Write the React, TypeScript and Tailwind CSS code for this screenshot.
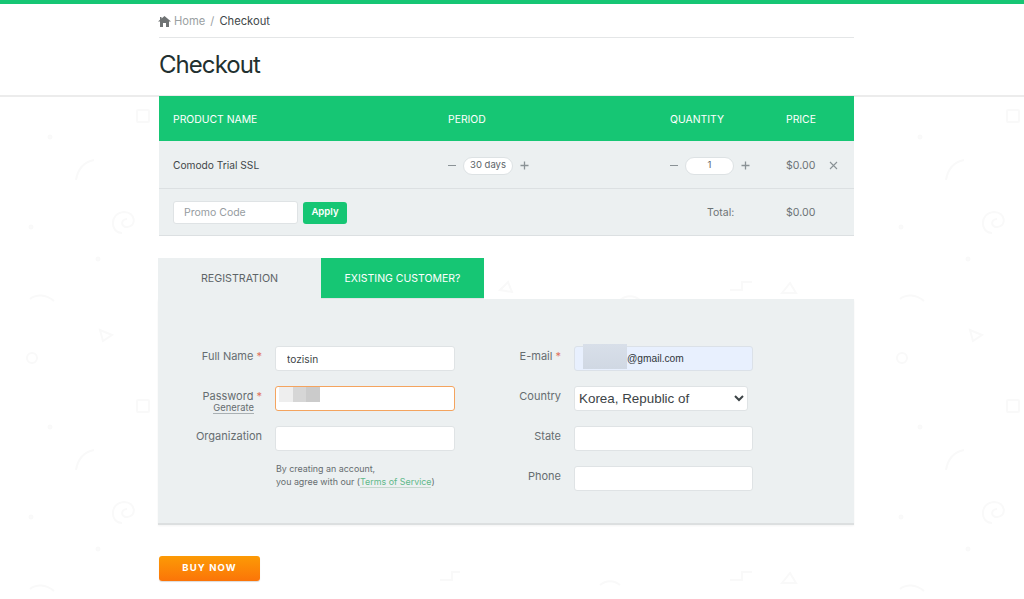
import React from 'react';

const font = "font-['Inter','Noto_Sans',sans-serif]";

const Stepper = ({ value, pill }: { value: string; pill: string }) => (
  <div className="flex items-center text-[#8a9296]">
    <span className="w-[8px] h-[1.5px] bg-[#8a9296]"></span>
    <span className={pill + ' mx-[7px] h-[18px] rounded-full bg-white border border-[#dde2e4] flex items-center justify-center text-[9.5px] text-[#5c6468]'}>{value}</span>
    <svg width="9" height="9" viewBox="0 0 9 9" className="stroke-[#8a9296]" strokeWidth="1.3">
      <path d="M4.5 0.5v8M0.5 4.5h8" />
    </svg>
  </div>
);

const Field = ({ label, required, sub, children }: { label: string; required?: boolean; sub?: boolean; children: React.ReactNode }) => (
  <div className="flex h-[25px] items-start">
    <div className="w-[104px] shrink-0 text-right text-[11px] leading-[14px] text-[#666d70] pt-[3px]">
      {label}
      {required && <span className="text-[#e0705c]"> *</span>}
      {sub && (
        <div className="text-[9.4px] leading-[10px] pr-[8px]">
          <span className="border-b border-[#a9b0b3]">Generate</span>
        </div>
      )}
    </div>
    <div className="ml-[13px] flex-1">{children}</div>
  </div>
);

const inputBase = 'block w-full h-[25px] rounded-[3px] border outline-none text-[#3c4346] px-[11px]';
const inputCls = inputBase + ' bg-white border-[#dfe3e5] text-[10.2px]';

const Pattern = () => (
  <svg className="absolute inset-0 w-full h-full" width="1024" height="599" fill="none" stroke="#f9f9f9" strokeWidth="2">
    <defs>
      <g id="decor">
        <path d="M122 233c-12 0-13-20 2-21 12 0 13 15 3 15-7 0-6-8 0-8" />
        <rect x="137" y="110" width="12" height="12" rx="1" />
        <path d="M76 180c2-12 8-18 18-20" />
        <path d="M30 299c6-5 16-5 24 2" />
        <path d="M100 330l12 5-9 6z" />
        <circle cx="32" cy="358" r="5" />
        <circle cx="50" cy="137" r="1.5" />
        <circle cx="31" cy="227" r="1.5" />
        <circle cx="98" cy="259" r="1.5" />
      </g>
    </defs>
    <use href="#decor" />
    <use href="#decor" y="290" />
    <use href="#decor" x="870" />
    <use href="#decor" x="870" y="290" />
    <path d="M730 290h12v-8h10M782 293l8-10 6 10zM440 580h12v-8h8M500 290l8-8 4 10zM620 300c6-5 14-5 20 0" />
    <path d="M730 580h12v-8h10M782 583l8-10 6 10zM600 585c6-5 14-5 20 0" />
  </svg>
);

export default function App() {
  return (
    <div className={font + ' relative w-full h-[599px] overflow-hidden bg-white'}>
      <Pattern />
      <div className="relative">
        <div className="h-[4px] bg-[#16c674]"></div>
        <header className="h-[93px] bg-white border-b-2 border-[#ececec]">
          <div className="w-[695px] ml-[159px]">
            <div className="h-[34px] pt-[1px] border-b border-[#e4e6e7] flex items-center text-[11.2px] text-[#9aa0a2]">
              <svg width="13" height="11" viewBox="0 0 13 11" className="fill-[#6f7374] -ml-[1px] mr-[3px]">
                <path d="M6.5 0L13 5.5H11V11H8V7H5V11H2V5.5H0L2 3.8V1H3.5V2.5z" />
              </svg>
              <span>Home</span>
              <span className="mx-[5px]">/</span>
              <span className="text-[#41474a]">Checkout</span>
            </div>
            <h1 className="mt-[12px] text-[24px] leading-[30px] font-normal text-[#22302f] tracking-[-0.95px]">Checkout</h1>
          </div>
        </header>

        <main className="w-[695px] ml-[159px]">
          <div className="-mt-[1px] h-[45px] pt-[2px] bg-[#16c674] text-white text-[10.4px] grid grid-cols-[275px_222px_116px_1fr] items-center pl-[14px]">
            <div>PRODUCT NAME</div>
            <div>PERIOD</div>
            <div>QUANTITY</div>
            <div>PRICE</div>
          </div>

          <div className="h-[48px] pt-[2px] bg-[#ecf0f1] border-b border-[#dce0e2] grid grid-cols-[275px_222px_116px_1fr] items-center pl-[14px] text-[10.2px]">
            <div className="text-[#3f4649]">Comodo Trial SSL</div>
            <Stepper value="30 days" pill="w-[50px]" />
            <Stepper value="1" pill="w-[49px]" />
            <div className="flex items-center text-[#6c7376]">
              <span className="text-[10.6px]">$0.00</span>
              <svg width="9" height="9" viewBox="0 0 9 9" className="ml-[14px] stroke-[#8a9296]" strokeWidth="1.1">
                <path d="M1 1l7 7M8 1l-7 7" />
              </svg>
            </div>
          </div>

          <div className="h-[47px] pt-[1px] bg-[#ecf0f1] border-b border-[#dce0e2] grid grid-cols-[275px_222px_116px_1fr] items-center pl-[14px] text-[10.5px]">
            <div className="col-span-2 flex items-center">
              <input readOnly placeholder="Promo Code" className="w-[125px] h-[23px] rounded-[3px] bg-white border border-[#dfe3e5] px-[10px] text-[10.5px] placeholder:text-[#969c9f] outline-none" />
              <button className="ml-[5px] w-[44px] h-[22px] rounded-[3px] bg-[#16c674] text-white font-semibold text-[9.6px]">Apply</button>
            </div>
            <div className="pl-[37px] text-[#6c7376]">Total:</div>
            <div className="text-[#6c7376] text-[10.6px]">$0.00</div>
          </div>

          <div className="mt-[22px] flex h-[41px] w-[326px]">
            <div className="w-[163px] -ml-[1px] pt-[2px] bg-[#ecf0f1] flex items-center justify-center text-[#5d6467] text-[10.7px]">REGISTRATION</div>
            <div className="w-[163px] pt-[2px] bg-[#16c674] border-b border-[#dfe3e5] flex items-center justify-center text-white text-[10.5px]">EXISTING CUSTOMER?</div>
          </div>

          <section className="-ml-[1px] w-[696px] h-[226px] bg-[#ecf0f1] border-b-2 border-[#dcdfe0] shadow-[0_1px_2px_rgba(0,0,0,0.05)] grid grid-cols-[297px_1fr] pt-[47px]">
            <div className="flex flex-col gap-[15px]">
              <Field label="Full Name" required>
                <input readOnly value="tozisin" className={inputCls} />
              </Field>
              <Field label="Password" required sub>
                <div className="relative">
                  <input readOnly className={inputBase + ' bg-white border-[#f4a45f]'} />
                  <div className="absolute left-[4px] top-[1px] flex h-[15px]">
                    <span className="w-[14px] bg-[#eeeeee]"></span>
                    <span className="w-[13px] bg-[#d6d6d6]"></span>
                    <span className="w-[14px] bg-[#cbcbcb]"></span>
                  </div>
                </div>
              </Field>
              <Field label="Organization">
                <input readOnly className={inputCls} />
              </Field>
              <p className="ml-[118px] -mt-[4px] text-[8.9px] leading-[13px] text-[#666d70]">
                By creating an account,
                <br />
                you agree with our (<span className="text-[#5fb98a] border-b border-[#c4d8cd]">Terms of Service</span>)
              </p>
            </div>

            <div className="flex flex-col gap-[15px] w-[296px] ml-[2px]">
              <Field label="E-mail" required>
                <div className="relative">
                  <input readOnly value="@gmail.com" className={inputBase + " bg-[#e8f0fe] border-[#dbe1e8] pl-[52px] font-['Liberation_Sans',sans-serif] text-[10.2px] text-[#30363a]"} />
                  <div className="absolute left-[9px] -top-[2px] w-[44px] h-[25px] bg-gradient-to-b from-[#d8dfe9] to-[#d0d8e3]"></div>
                </div>
              </Field>
              <Field label="Country">
                <select className="block w-[174px] h-[25px] rounded-[3px] bg-white border border-[#dfe3e5] text-[13.4px] text-[#3c4346] font-['Liberation_Sans',sans-serif] outline-none">
                  <option>Korea, Republic of</option>
                </select>
              </Field>
              <Field label="State">
                <input readOnly className={inputCls} />
              </Field>
              <Field label="Phone">
                <input readOnly className={inputCls} />
              </Field>
            </div>
          </section>

          <button className="mt-[31px] block w-[101px] h-[25px] rounded-[3px] bg-gradient-to-b from-[#fc9a05] to-[#fb7408] text-white font-bold text-[9.5px] tracking-[1.1px] shadow-[0_1px_1px_rgba(0,0,0,0.15)]">BUY NOW</button>
        </main>
      </div>
    </div>
  );
}
